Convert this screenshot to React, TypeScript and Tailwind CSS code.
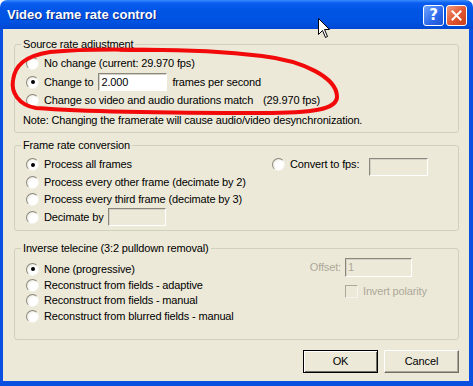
import React from 'react'

const font = "font-['Liberation_Sans',Arial,sans-serif]"

const Radio = ({ checked = false }: { checked?: boolean }) => (
  <span className="relative flex-none w-[13px] h-[13px] rounded-full border border-t-[#8a877b] border-l-[#8a877b] border-r-[#f4f3ee] border-b-[#f4f3ee] bg-[radial-gradient(circle_at_65%_65%,#ffffff_45%,#dcd9cc)] flex items-center justify-center">
    {checked && <span className="w-[4px] h-[4px] rounded-full bg-black" />}
  </span>
)

const RadioRow = ({
  label,
  checked,
  className = '',
  children,
}: {
  label: string
  checked?: boolean
  className?: string
  children?: React.ReactNode
}) => (
  <div className={'flex items-center ' + className}>
    <Radio checked={checked} />
    <span className="ml-[5px] whitespace-nowrap">{label}</span>
    {children}
  </div>
)

const Field = ({
  value = '',
  disabled = false,
  className = '',
}: {
  value?: string
  disabled?: boolean
  className?: string
}) => (
  <div
    className={
      'flex items-center px-[2px] border border-t-[#8a877b] border-l-[#8a877b] border-r-white border-b-white shadow-[inset_1px_1px_0_#d4d0c8] ' +
      (disabled ? 'bg-[#ece9d8] text-[#aca899] ' : 'bg-white text-black ') +
      className
    }
  >
    {value}
  </div>
)

const Group = ({
  title,
  className = '',
  children,
}: {
  title: string
  className?: string
  children: React.ReactNode
}) => (
  <fieldset className={'border border-[#d0d0bf] rounded-[3px] ' + className}>
    <legend className="ml-[6px] px-[2px] leading-[13px]">{title}</legend>
    {children}
  </fieldset>
)

const App = () => {
  return (
    <div
      className={
        'relative w-[473px] h-[386px] flex flex-col bg-white text-[11px] leading-[13px] tracking-[-0.15px] text-black ' +
        font
      }
    >
      {/* title bar */}
      <div className="h-[29px] flex-none flex items-center rounded-t-[7px] bg-[linear-gradient(180deg,#3a8cff_0px,#0b5ef0_3px,#0055e6_10px,#0052e0_22px,#0048d4_29px)] pl-[7px] pr-[6px]">
        <span className="text-white font-bold text-[13px] tracking-normal [text-shadow:1px_1px_0_#0a2a8a]">
          Video frame rate control
        </span>
        <div className="ml-auto flex gap-[2px] mt-[1px]">
          <div className="w-[21px] h-[21px] rounded-[3px] border border-white bg-[linear-gradient(135deg,#6fa4ff,#2c68ea_60%,#1d54d4)] flex items-center justify-center text-white font-bold text-[15px] font-['DejaVu_Sans',sans-serif]">
            ?
          </div>
          <div className="w-[21px] h-[21px] rounded-[3px] border border-white bg-[linear-gradient(135deg,#f19a7c,#e1552f_55%,#c8401c)] flex items-center justify-center">
            <svg width="11" height="11" viewBox="0 0 11 11">
              <path d="M1.5 1.5 L9.5 9.5 M9.5 1.5 L1.5 9.5" stroke="white" strokeWidth="2" strokeLinecap="square" />
            </svg>
          </div>
        </div>
      </div>

      {/* body */}
      <div className="flex-1 flex flex-col bg-[#ece9d8] border-l-[3px] border-r-[4px] border-b-[5px] border-[#0850e0] pl-[11px] pr-[10px] pt-[9px]">
        <Group title="Source rate adjustment" className="pb-[3px]">
          <div className="pl-[11px] pt-[3px]">
            <RadioRow label="No change (current: 29.970 fps)" className="h-[18px]" />
            <RadioRow label="Change to" checked className="h-[18px] mt-[1px]">
              <Field value="2.000" className="ml-[5px] w-[69px] h-[18px]" />
              <span className="ml-[5px]">frames per second</span>
            </RadioRow>
            <RadioRow label="Change so video and audio durations match" className="h-[18px]">
              <span className="ml-[10px]">(29.970 fps)</span>
            </RadioRow>
          </div>
          <div className="pl-[8px] h-[18px] mt-[2px] flex items-center">
            Note: Changing the framerate will cause audio/video desynchronization.
          </div>
        </Group>

        <Group title="Frame rate conversion" className="mt-[6px] pb-[4px]">
          <div className="pl-[11px] pt-[4px]">
            <div className="flex items-center h-[17px]">
              <div className="w-[246px]">
                <RadioRow label="Process all frames" checked />
              </div>
              <Radio />
              <span className="ml-[5px] w-[79px] whitespace-nowrap">Convert to fps:</span>
              <Field disabled className="w-[59px] h-[18px] mt-[5px]" />
            </div>
            <RadioRow label="Process every other frame (decimate by 2)" className="h-[17px] mt-[1px]" />
            <RadioRow label="Process every third frame (decimate by 3)" className="h-[17px]" />
            <RadioRow label="Decimate by" className="h-[18px]">
              <Field disabled className="ml-[5px] w-[58px] h-[18px]" />
            </RadioRow>
          </div>
        </Group>

        <Group title="Inverse telecine (3:2 pulldown removal)" className="mt-[11px] pb-[15px]">
          <div className="flex">
            <div className="flex-1 pl-[11px] pt-[6px]">
              <RadioRow label="None (progressive)" checked className="h-[16px]" />
              <RadioRow label="Reconstruct from fields - adaptive" className="h-[16px]" />
              <RadioRow label="Reconstruct from fields - manual" className="h-[15px]" />
              <RadioRow label="Reconstruct from blurred fields - manual" className="h-[16px]" />
            </div>
            <div className="w-[158px] flex-none pt-[3px] grid grid-cols-[41px_auto] gap-x-[4px] content-start text-[#aca899]">
              <div className="h-[19px] flex items-center justify-end">Offset:</div>
              <Field value="1" disabled className="w-[67px] h-[19px]" />
              <div />
              <div className="flex items-center mt-[8px] h-[13px]">
                <span className="w-[13px] h-[13px] border border-t-[#aca899] border-l-[#aca899] border-r-[#f4f3ee] border-b-[#f4f3ee] bg-[#ece9d8]" />
                <span className="ml-[5px] whitespace-nowrap">Invert polarity</span>
              </div>
            </div>
          </div>
        </Group>

        <div className="mt-[10px] flex justify-end gap-[6px]">
          <button className="w-[75px] h-[23px] border border-black bg-[#ece9d8] shadow-[inset_1px_1px_0_#ffffff,inset_-1px_-1px_0_#716f64] flex items-center justify-center">
            OK
          </button>
          <button className="w-[75px] h-[23px] border border-t-white border-l-white border-r-[#716f64] border-b-[#716f64] bg-[#ece9d8] shadow-[inset_-1px_-1px_0_#aca899] flex items-center justify-center">
            Cancel
          </button>
        </div>
      </div>

      {/* hand-drawn red annotation and mouse pointer */}
      <svg className="absolute inset-0 pointer-events-none" width="473" height="386" viewBox="0 0 473 386">
        <path
          d="M120 50 C 170 49, 220 51, 262 56 C 305 61, 336 78, 337 96 C 338 110, 310 113, 262 113 C 190 113, 90 112, 36 108 C 18 105, 11 92, 13 80 C 15 66, 24 56, 50 52 C 80 49, 110 49, 150 50"
          fill="none"
          stroke="#f20a0a"
          strokeWidth="4"
          strokeLinecap="round"
        />
        <g transform="translate(318 18)">
          <path d="M0.5 0.5 L0.5 16.5 L4.5 12.5 L7.5 19.5 L9.5 18.5 L6.5 11.5 L11.5 11.5 Z" fill="white" stroke="black" strokeWidth="1" />
        </g>
      </svg>
    </div>
  )
}

export default App
